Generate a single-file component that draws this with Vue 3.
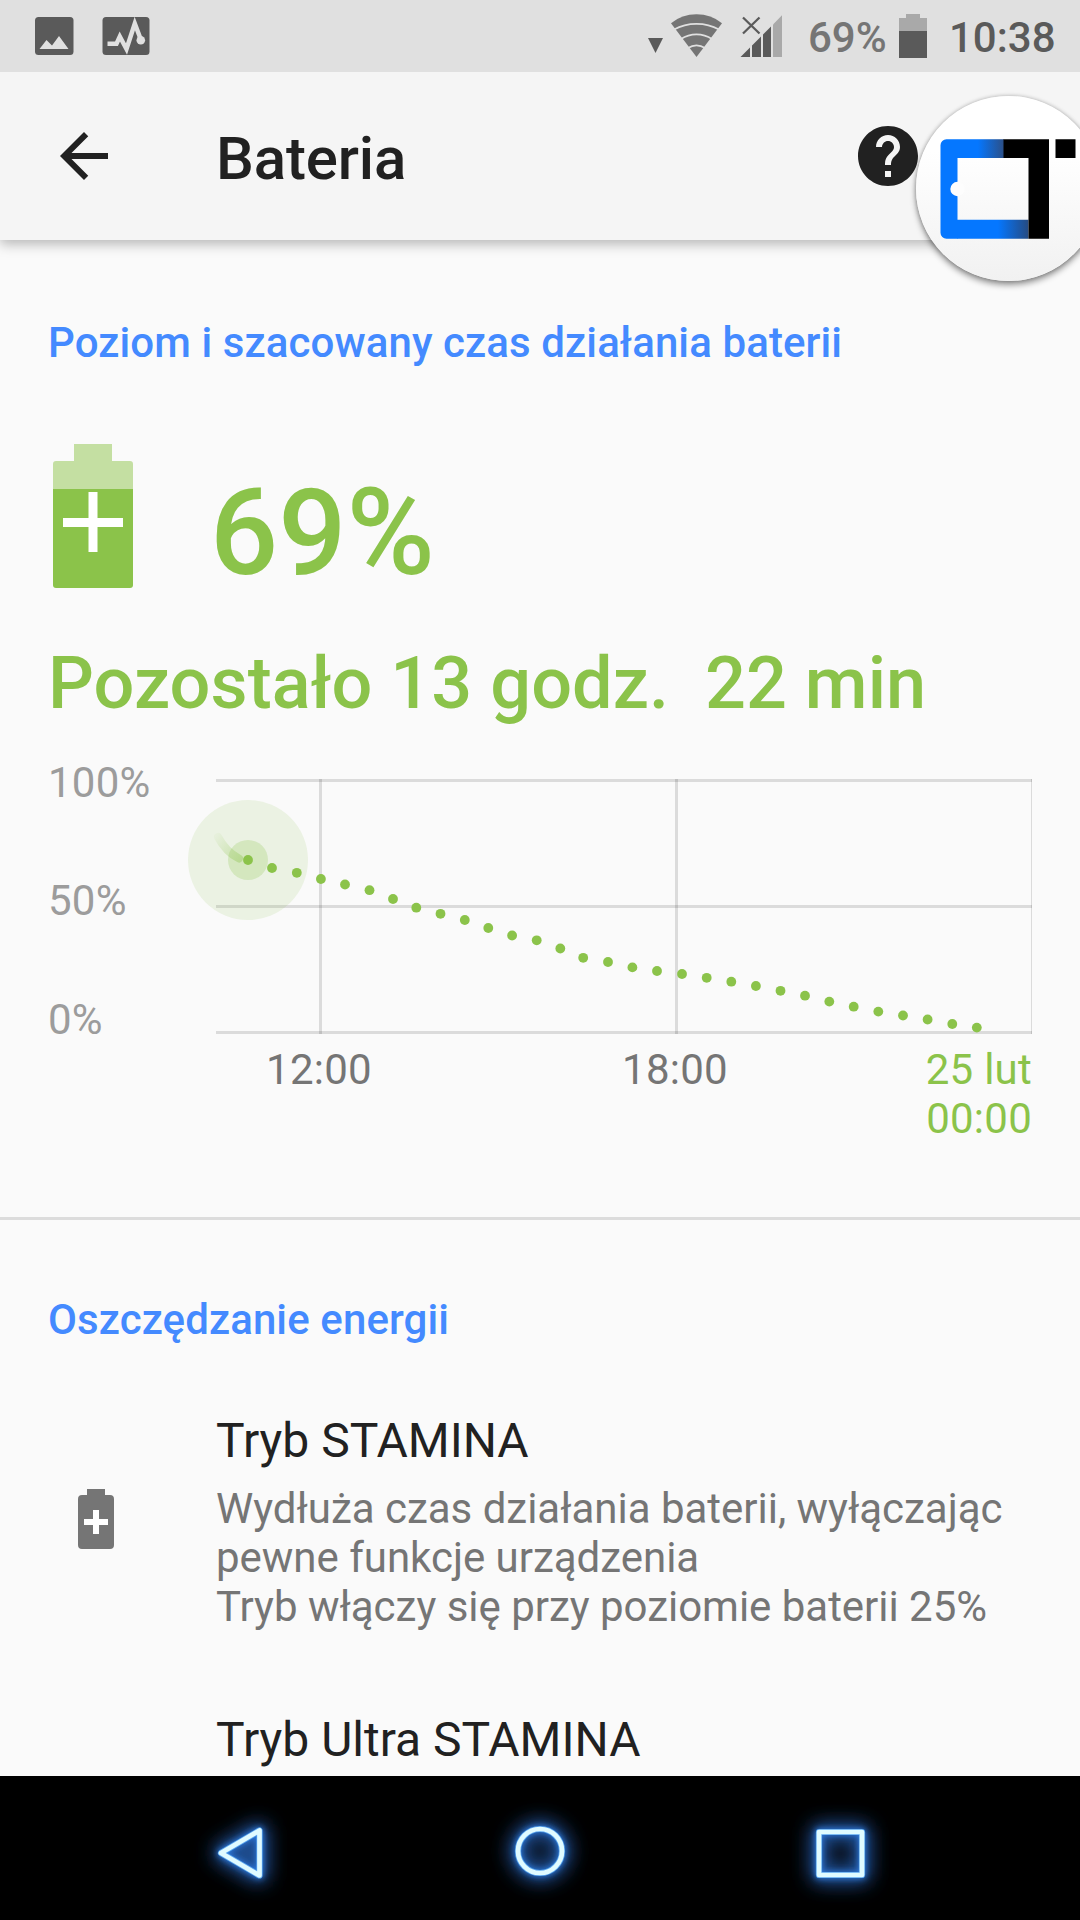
<script setup>
// projected discharge, in screen coordinates of the plot
const forecast = [
  [248, 860], [272, 868], [296.8, 872.8], [320.9, 879], [345, 884.5], [369.5, 890.2], [393, 899],
  [416.3, 907.7], [440.5, 913.8], [464.8, 920], [488.3, 928], [512.1, 935.5], [536.7, 940.3],
  [560.3, 948.5], [583.2, 957.8], [608, 962], [632.4, 967.4], [657, 971], [682, 974], [706.7, 977.8],
  [731.3, 981.7], [755.9, 986], [780.5, 990.8], [805, 995.7], [829.3, 1001.6], [853.7, 1006.7],
  [878.3, 1011.6], [903, 1015.5], [927.6, 1019.5], [952.3, 1024], [976.8, 1027.6],
];

const levels = ["100%", "50%", "0%"];

const modes = [
  {
    key: "stamina",
    title: "Tryb STAMINA",
    icon: true,
    lines: [
      "Wydłuża czas działania baterii, wyłączając",
      "pewne funkcje urządzenia",
      "Tryb włączy się przy poziomie baterii 25%",
    ],
  },
  { key: "ultra", title: "Tryb Ultra STAMINA", icon: false, lines: [] },
];
</script>

<template>
  <div class="screen">
    <header class="status-bar">
      <svg class="status-bar__notifications" viewBox="0 0 160 72">
        <rect x="35" y="17" width="38.5" height="38" rx="3.5" fill="#5a5a5a" />
        <path d="M39.5 49l7-9 5.5 5.500 7-9.500 9.500 13z" fill="#e0e0e0" />
        <rect x="102.500" y="17" width="47" height="38" rx="3.500" fill="#5a5a5a" />
        <path
          d="M107.500 43.700h9l3.300-7.200 6.700 12.500 8.300-25.500 6 16"
          fill="none"
          stroke="#e0e0e0"
          stroke-width="4.500"
        />
        <circle cx="140.800" cy="40.300" r="4.300" fill="#e0e0e0" />
      </svg>
      <div class="status-bar__system">
        <svg class="status-bar__network" viewBox="640 0 150 72">
          <path d="M648 38h15l-7.500 15z" fill="#5a5a5a" />
          <path d="M696.500 57L671 23.200Q682 14.300 696.500 14.300T722 23.200z" fill="#757575" />
          <g fill="none" stroke="#e0e0e0" stroke-width="1.700">
            <path d="M674 29.500Q684 23.800 696.500 23.800T719 29.500" />
            <path d="M681 39Q688 34.300 696.500 34.300T712 39" />
            <path d="M688 48Q692 45.300 696.500 45.300T705 48" />
          </g>
          <path
            d="M740.500 57L750 47.500V57zM752 57V45.500L761 36.500V57zM763 57V34.500L771 26.500V57z"
            fill="#5a5a5a"
          />
          <path d="M773 57V24.500L782 15.200V57z" fill="#a9a9a9" />
          <path d="M743 17.500l16.500 16M759.500 17.500l-16.500 16" stroke="#5a5a5a" stroke-width="2.300" />
        </svg>
        <span class="status-bar__level">69%</span>
        <svg class="status-bar__battery" viewBox="0 0 28 44">
          <path d="M7 0h14v4h7v13H0V4h7z" fill="#a9a9a9" />
          <path d="M0 17h28v27H0z" fill="#5a5a5a" />
        </svg>
        <span class="status-bar__clock">10:38</span>
      </div>
    </header>

    <nav class="app-bar">
      <svg class="app-bar__icon" viewBox="0 0 24 24">
        <path d="M20 11H7.830l5.590-5.590L12 4l-8 8 8 8 1.410-1.410L7.830 13H20z" />
      </svg>
      <h1>Bateria</h1>
      <svg class="app-bar__icon app-bar__help" viewBox="0 0 24 24">
        <path
          d="M12 2C6.480 2 2 6.480 2 12s4.480 10 10 10 10-4.480 10-10S17.520 2 12 2zm1 17h-2v-2h2v2zm2.070-7.750l-.9.920C13.450 12.900 13 13.500 13 15h-2v-.5c0-1.100.45-2.100 1.170-2.830l1.240-1.260c.37-.36.59-.86.59-1.410 0-1.100-.9-2-2-2s-2 .9-2 2H8c0-2.210 1.790-4 4-4s4 1.790 4 4c0 .88-.36 1.680-.93 2.250z"
        />
      </svg>
    </nav>

    <!-- floating button, partly past the screen edge -->
    <div class="bubble">
      <svg viewBox="916 96 185 185">
        <defs>
          <linearGradient id="logo-top" x1="978" x2="1004" y1="0" y2="0" gradientUnits="userSpaceOnUse">
            <stop offset="0" stop-color="#0577ff" />
            <stop offset="1" stop-color="#2c4f86" />
          </linearGradient>
          <linearGradient id="logo-bottom" x1="998" x2="1029" y1="0" y2="0" gradientUnits="userSpaceOnUse">
            <stop offset="0" stop-color="#0577ff" />
            <stop offset="1" stop-color="#264a80" />
          </linearGradient>
        </defs>
        <path d="M946.500 139.300H1004V158H957.500V238.700H946.500a6 6 0 0 1-6-6V145.300a6 6 0 0 1 6-6z" fill="url(#logo-top)" />
        <path d="M957 219.700h71.500v19H957z" fill="url(#logo-bottom)" />
        <path d="M1003.500 139.300H1049v99.400h-20.500V158h-25zM1055.500 139.300h20V158h-20z" fill="#000" />
        <circle cx="957.500" cy="189" r="7.200" fill="#fdfdfd" />
      </svg>
    </div>

    <main class="content">
      <section class="usage">
        <h2>Poziom i szacowany czas działania baterii</h2>
        <div class="usage__level">
          <svg class="usage__battery" viewBox="0 0 80 144">
            <path d="M21 0h38v17h18a3 3 0 0 1 3 3v25H0V20a3 3 0 0 1 3-3h18z" fill="#c4dfa2" />
            <path d="M0 45h80v96a3 3 0 0 1-3 3H3a3 3 0 0 1-3-3z" fill="#8bc34a" />
            <path d="M35.500 48h9v26H70v9H44.500v25h-9V83H10v-9h25.500z" fill="#fff" />
          </svg>
          <span>69%</span>
        </div>
        <p class="usage__remaining">Pozostało 13 godz.&nbsp; 22 min</p>

        <div class="chart">
          <div class="chart__levels">
            <span v-for="level in levels" :key="level">{{ level }}</span>
          </div>
          <div class="chart__body">
            <svg class="chart__plot" viewBox="216 758 816 287">
              <defs>
                <linearGradient id="trail" x1="216" y1="836" x2="243" y2="860" gradientUnits="userSpaceOnUse">
                  <stop offset="0" stop-color="#8bc34a" stop-opacity="0.05" />
                  <stop offset="1" stop-color="#8bc34a" stop-opacity="0.4" />
                </linearGradient>
              </defs>
              <g fill="#000" fill-opacity="0.12">
                <rect x="216" y="779" width="816" height="3" />
                <rect x="216" y="905" width="816" height="3" />
                <rect x="216" y="1031" width="816" height="3" />
                <rect x="319" y="779" width="3" height="255" />
                <rect x="675" y="779" width="3" height="255" />
                <rect x="1031" y="779" width="1" height="255" />
              </g>
              <circle cx="248" cy="860" r="60" fill="#8bc34a" fill-opacity="0.13" />
              <circle cx="248" cy="860" r="20" fill="#8bc34a" fill-opacity="0.24" />
              <path d="M218 837Q226 852 239 858.500" fill="none" stroke="url(#trail)" stroke-width="8" stroke-linecap="round" />
              <circle v-for="([x, y], i) in forecast" :key="i" :cx="x" :cy="y" r="4.900" fill="#8bc34a" />
            </svg>
            <div class="chart__times">
              <span>12:00</span>
              <span>18:00</span>
              <span class="chart__end">25 lut<br />00:00</span>
            </div>
          </div>
        </div>
      </section>

      <section class="saving">
        <h2>Oszczędzanie energii</h2>
        <article v-for="mode in modes" :key="mode.key" class="mode">
          <div class="mode__icon">
            <svg v-if="mode.icon" viewBox="0 0 36 60">
              <path d="M9 0h18v6h5a4 4 0 0 1 4 4v46a4 4 0 0 1-4 4H4a4 4 0 0 1-4-4V10a4 4 0 0 1 4-4h5z" fill="#757575" />
              <path d="M15 21h6v9h9v6h-9v9h-6v-9H6v-6h9z" fill="#fff" />
            </svg>
          </div>
          <div class="mode__text">
            <h3>{{ mode.title }}</h3>
            <p v-for="line in mode.lines" :key="line">{{ line }}</p>
          </div>
        </article>
      </section>
    </main>

    <footer class="nav-bar">
      <svg viewBox="0 1776 1080 144">
        <defs>
          <filter id="glow-wide" x="-100%" y="-100%" width="300%" height="300%">
            <feGaussianBlur stdDeviation="10" />
          </filter>
          <filter id="glow-near" x="-60%" y="-60%" width="220%" height="220%">
            <feGaussianBlur stdDeviation="3" />
          </filter>
          <g id="nav-keys" fill="none" stroke-linejoin="round">
            <path d="M221 1853L259.500 1830.500V1875.500z" />
            <circle cx="540" cy="1851" r="22" />
            <path d="M819 1832h43v43h-43z" />
          </g>
        </defs>
        <use href="#nav-keys" stroke="#2a6bc8" stroke-width="14" filter="url(#glow-wide)" />
        <use href="#nav-keys" stroke="#2f7fe6" stroke-width="7" filter="url(#glow-near)" />
        <use href="#nav-keys" stroke="#5aa6f0" stroke-width="6.200" />
        <use href="#nav-keys" stroke="#e0fbff" stroke-width="4.700" />
      </svg>
    </footer>
  </div>
</template>

<style>
body {
  margin: 0;
  background: #000;
}
</style>

<style scoped>
.screen {
  position: relative;
  display: flex;
  flex-direction: column;
  width: 1080px;
  height: 1920px;
  overflow: hidden;
  background: #fafafa;
  color: #212121;
  font-family: Roboto, "Noto Sans", sans-serif;
}
svg {
  display: block;
  flex: none;
}
h1,
h2,
h3,
p {
  margin: 0;
}
.status-bar {
  position: relative;
  z-index: 2;
  display: flex;
  justify-content: space-between;
  flex: none;
  height: 72px;
  background: #e0e0e0;
}
.status-bar__notifications {
  width: 160px;
  height: 72px;
}
.status-bar__system {
  display: flex;
  padding-right: 24px;
  font-size: 42px;
  font-weight: 500;
  line-height: 49px;
}
.status-bar__network {
  width: 150px;
  height: 72px;
}
.status-bar__level {
  width: 91px;
  padding: 13px 0 0 18px;
  color: #757575;
}
.status-bar__battery {
  width: 28px;
  height: 44px;
  margin-top: 14px;
}
.status-bar__clock {
  width: 107px;
  margin-left: 22px;
  padding-top: 13px;
  color: #5a5a5a;
}
.app-bar {
  position: relative;
  z-index: 1;
  display: flex;
  align-items: center;
  flex: none;
  box-sizing: border-box;
  height: 168px;
  padding: 0 156px 0 48px;
  background: #f5f5f5;
  box-shadow: 0 4px 12px rgba(0, 0, 0, 0.28);
}
.app-bar__icon {
  width: 72px;
  height: 72px;
  fill: #212121;
}
.app-bar h1 {
  margin-left: 96px;
  padding-top: 6px;
  font-size: 60px;
  font-weight: 500;
  letter-spacing: -0.15px;
  line-height: 70px;
}
.app-bar__help {
  margin-left: auto;
}
.bubble {
  position: absolute;
  z-index: 2;
  top: 96px;
  left: 916px;
  width: 185px;
  height: 185px;
  border-radius: 50%;
  background: linear-gradient(#fff 30%, #f1f1f1);
  box-shadow: 0 4px 6px rgba(0, 0, 0, 0.4), 0 0 4px rgba(0, 0, 0, 0.25);
}
.content {
  flex: 1;
  min-height: 0;
  overflow: hidden;
}
.content h2 {
  color: #448aff;
  font-size: 42px;
  font-weight: 500;
  letter-spacing: 0.1px;
  line-height: 49px;
}
.usage {
  box-sizing: border-box;
  height: 980px;
  padding: 78px 48px 0;
  border-bottom: 3px solid #dcdcdc;
}
.usage__level {
  display: flex;
  align-items: flex-start;
  height: 160px;
  margin-top: 77px;
  padding-left: 5px;
  color: #8bc34a;
  font-size: 120px;
  font-weight: 500;
  line-height: 141px;
}
.usage__battery {
  width: 80px;
  height: 144px;
}
.usage__level span {
  margin: 19px 0 0 77px;
}
.usage__remaining {
  margin-top: 38px;
  color: #8bc34a;
  font-size: 72px;
  font-weight: 500;
  letter-spacing: 0.06px;
  line-height: 84px;
}
.chart {
  display: flex;
  margin-top: 32px;
  font-size: 42px;
  letter-spacing: 0.25px;
  line-height: 49px;
}
.chart__levels {
  display: flex;
  flex-direction: column;
  justify-content: space-between;
  width: 168px;
  height: 286px;
  color: #9c9c9c;
}
.chart__levels span:nth-child(2) {
  margin-top: -1px;
}
.chart__plot {
  width: 816px;
  height: 287px;
  overflow: visible;
}
.chart__times {
  display: grid;
  grid-template-columns: 206px 506px 104px;
  color: #757575;
  text-align: center;
}
.chart__end {
  justify-self: end;
  color: #8bc34a;
  text-align: right;
  white-space: nowrap;
}
.saving {
  padding: 75px 48px 0;
}
.saving h2 {
  margin-bottom: 69px;
}
.mode {
  display: flex;
  margin-bottom: 81px;
}
.mode__icon {
  width: 168px;
}
.mode__icon svg {
  width: 36px;
  height: 60px;
  margin: 76px 0 0 30px;
}
.mode__text h3 {
  font-size: 48px;
  font-weight: 400;
  line-height: 56px;
}
.mode__text h3 + p {
  margin-top: 15px;
}
.mode__text p {
  color: #757575;
  font-size: 42px;
  letter-spacing: -0.02px;
  line-height: 49px;
  white-space: nowrap;
}
.nav-bar {
  flex: none;
  height: 144px;
  background: #000;
}
.nav-bar svg {
  width: 1080px;
  height: 144px;
}
</style>
